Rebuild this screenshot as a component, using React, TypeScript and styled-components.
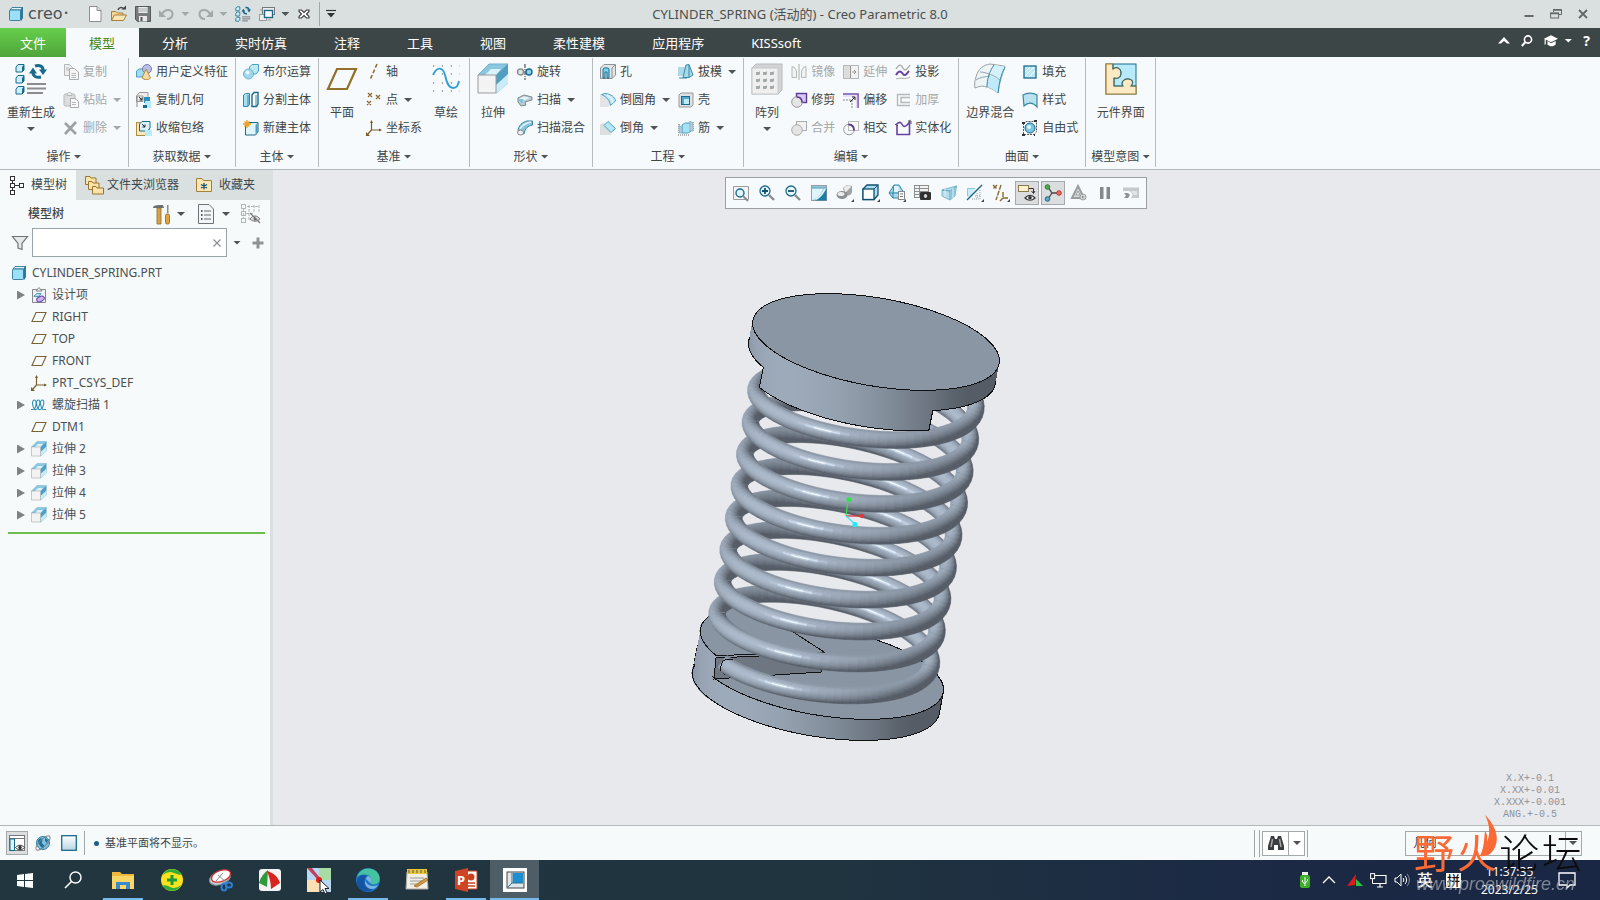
import React from "react";
import styled, { createGlobalStyle } from "styled-components";

const Global = createGlobalStyle`
  * { box-sizing: border-box; }
  html, body, #root { height: 100%; }
  body {
    margin: 0;
    font-family: "Noto Sans", "Noto Sans CJK SC", sans-serif;
    font-size: 12px;
    line-height: 16px;
    color: #3f4648;
    overflow: hidden;
  }
  button, input, select { font: inherit; color: inherit; }
  button { background: none; border: 0; padding: 0; margin: 0; white-space: nowrap; }
`;

/* ---------- icons ---------- */

const Svg = styled.svg`
  display: block;
  flex: none;
`;

const B = "#1b6a8c";
const L = "#9fdcf3";
const P = "#d9f2fb";
const T = "#8a6b2f";
const G = "#8b8f91";

const extrude = (
  <>
    <path d="M1 12 12 1H31L19 12z" fill="#8cc7e0" stroke="#6fb0cc" />
    <path d="M31 1V20L19 31V12z" fill="#4f9fc2" />
    <path d="M31 11V20L19 31V22z" fill="#c9ecf8" />
    <path d="M8 12 14 6H24L19 12z" fill="#d9f2fb" />
    <path d="M1 12H19V30H1z" fill="#f3f3f3" stroke="#9b9b9b" />
  </>
);

const icons: Record<string, [number, React.ReactNode]> = {
  cube: [16, <><path d="M2 4 4 1.500H14.500L13 4z" fill="#dff4fb" stroke={B} strokeWidth=".8" /><path d="M13 4 14.500 1.500V12L13 14.500z" fill="#2f87ab" stroke={B} strokeWidth=".8" /><rect x="1.500" y="4" width="11" height="10.500" rx="1" fill="#9be0f8" stroke={B} strokeWidth=".8" /></>],
  newDoc: [16, <><path d="M2.500 .5H10L14 4.500V15.500H2.500z" fill="#fff" stroke="#8d8d8d" /><path d="M10 .5V4.500H14" fill="#ddd" stroke="#8d8d8d" /></>],
  open: [16, <><path d="M.5 14V5.500H5L6.500 7H12V9" fill="#f3d796" stroke="#a5803a" /><path d="M.5 14.500 3.500 9H15.500L12.500 14.500z" fill="#fbe7b6" stroke="#a5803a" /><path d="M7 4C8 1 11 1 13 3" fill="none" stroke="#444" strokeWidth="1.500" /><path d="M10.500 3.500H15V-.5z" fill="#444" /></>],
  save: [16, <><path d="M.5 .5H15.500V15.500H2.500L.5 13.500z" fill="#777b7d" stroke="#55595b" /><rect x="3.500" y="1" width="9" height="6" fill="#eee" /><path d="M4 3H12M4 5H12" stroke="#aaa" /><rect x="4" y="10" width="8" height="5.500" fill="#e9e9e9" /><rect x="5.500" y="11" width="2" height="4" fill="#555" /></>],
  undo: [16, <><path d="M3 8C6 2 14 3 13.500 8.500 13 12 10 13 8 13" fill="none" stroke="#a3a8a8" strokeWidth="2" /><path d="M0 4V11H7z" fill="#a3a8a8" /></>],
  redo: [16, <><path d="M13 8C10 2 2 3 2.500 8.500 3 12 6 13 8 13" fill="none" stroke="#a3a8a8" strokeWidth="2" /><path d="M16 4V11H9z" fill="#a3a8a8" /></>],
  regen: [20, <><g fill="#c9effa" stroke={B}><path d="M1 2.500 2.500 1H6V5L5 6H1z" /><path d="M1 9 2.500 7.500H6V11.500L5 12.500H1z" /><path d="M1 15.500 2.500 14H6V18L5 19H1z" /></g><path d="M13 2C16 1.500 17.500 3 17.500 5M15 9.500C12 10 10.500 8.500 10.500 6" fill="none" stroke={B} strokeWidth="2" /><path d="M15 4.500H20L17.500 8zM8 7H13L10.500 3.500z" fill={B} /><path d="M9 13.500H19M9 16H19M9 18.500H16" stroke="#8b8b90" strokeWidth="1.500" /></>],
  windows: [16, <><rect x="3.500" y="1.500" width="12" height="7" fill="#eee" stroke="#777" /><rect x=".5" y="8.500" width="7" height="6" fill="#eee" stroke="#999" /><rect x="5.500" y="4.500" width="8" height="7" fill="#fff" stroke={B} strokeWidth="1.400" /><path d="M1 4H4M9 14H12" stroke="#999" /></>],
  closeDoc: [14, <path d="M2 3H4.500L7 5.500 9.500 3H12V4.500L9.500 7 12 9.500V11H9.500L7 8.500 4.500 11H2V9.500L4.500 7 2 4.500z" fill="#fff" stroke="#3c3c3c" strokeWidth="1.100" />],
  customise: [12, <><path d="M1 2.500H11" stroke="#333" strokeWidth="1.200" /><path d="M2 5H10L6 9.500z" fill="#333" /></>],
  bigRegen: [32, <><g fill="#c9effa" stroke={B}><path d="M1 4 3 1.500H9V7L7 9H1z" /><path d="M1 15 3 12.500H9V18L7 20H1z" /><path d="M1 26 3 23.500H9V29L7 31H1z" /></g><path d="M9 1.500V7L7 9V4zM9 12.500V18L7 20V15zM9 23.500V29L7 31V26z" fill={B} /><path d="M20 3C25 1.500 28 3.500 28 7M26 14C21 15 18 13 18 9.500" fill="none" stroke={B} strokeWidth="3" /><path d="M24 6.500H32L28 12zM14 10.500H22L18 4.500z" fill={B} /><path d="M12 21H31M12 25.500H31M12 30H28" stroke="#8b8b90" strokeWidth="2" /></>],
  copy: [16, <><path d="M1.500 .5H6.500L9.500 3.500V11.500H1.500z" fill="#eee" stroke="#b5b8b8" /><path d="M6.500 4.500H11.500L15.500 8V15.500H6.500z" fill="#f6f6f6" stroke="#a9acac" /><path d="M3 4H6M3 6H6M8.500 9.500H13M8.500 11.500H13M8.500 13.500H13" stroke="#b5b8b8" /></>],
  paste: [16, <><rect x="1" y="2" width="11" height="12" rx="1.500" fill="#ddd" stroke="#b5b8b8" /><path d="M4 3.500C4 1 5 .5 6.500 .5S9 1 9 3.500z" fill="#eee" stroke="#b5b8b8" /><path d="M7.500 6.500H12L15.500 9.500V15.500H7.500z" fill="#fafafa" stroke="#a9acac" /><path d="M9 10.500H13M9 12.500H13" stroke="#b5b8b8" /></>],
  del: [16, <path d="M2 3 13 14M13 2 2 14" stroke="#9da1a1" strokeWidth="2.600" />],
  udf: [16, <><path d="M.5 7 3 5H9V11L7 13H.5z" fill={L} stroke="#4c9fc0" /><circle cx="11" cy="5" r="4.500" fill="#b9bfe6" stroke="#777fb0" /><path d="M10 5 14.500 14C13 16 8 16 6 14z" fill="#f5dca4" stroke="#b08a3f" /></>],
  copyGeom: [16, <><path d="M.5 4 3.500 .5H12V8M.5 4H7V9.500H.5z" fill="#ededed" stroke="#999" /><path d="M1 15V4" stroke="#888" /><path d="M3 5 6 8M6 5.500V8H3.500" stroke="#222" fill="none" /><rect x="8" y="5" width="6" height="6" fill="#2d8fb8" /><rect x="9" y="9" width="6" height="7" fill="#b9ecfb" /><rect x="7" y="13" width="4" height="3" fill={B} /></>],
  shrink: [16, <><rect x=".5" y="2.500" width="13" height="13" fill="#fbe7bb" stroke="#b08a3f" /><path d="M3.500 4 6 1.500H14V8L11.500 11H3.500z" fill={P} stroke={B} /><path d="M6 4 9 7M9 4.500V7H6.500" stroke="#222" fill="none" /><rect x="9" y="10" width="7" height="6" fill="#b9ecfb" /></>],
  boolean: [16, <><path d="M6.500 3 9 .5H15.500V7L13 10H6.500z" fill="#bde7f5" stroke="#4c9fc0" /><circle cx="5.500" cy="10" r="5" fill="#9fd8ee" stroke="#6fb0cc" /><circle cx="4.500" cy="8.500" r="2" fill="#e8f8fd" /></>],
  split: [16, <><path d="M.5 3 2.500 1.500H6.500V12L5 14.500H.5z" fill="#a7dff2" stroke="#2f87ab" /><path d="M9 3 11 .5H15V12L13.500 14.500H9z" fill="#fff" stroke={B} strokeWidth="1.400" /><path d="M5 14V3M13 14V3" stroke="#2f87ab" /></>],
  newBody: [16, <><path d="M2.500 5 5 2.500H15V12L12.500 15H2.500z" fill="#dff4fb" stroke={B} /><path d="M12.500 15V5L15 2.500V12z" fill="#4f9fc2" /><path d="M4 0V8M0 4H8M1.500 1.500 6.500 6.500M6.500 1.500 1.500 6.500" stroke="#f0a020" strokeWidth="1.300" /></>],
  plane: [32, <path d="M11 6H30L21 26H2z" fill="none" stroke="#91702c" strokeWidth="2.200" />],
  planeSmall: [16, <path d="M5 3.500H15L11 12.500H1z" fill="none" stroke="#7a6233" strokeWidth="1.100" />],
  axis: [16, <path d="M11 0 4 16" stroke={T} strokeWidth="1.500" strokeDasharray="4 2" />],
  points: [16, <path d="M2 1 6 5M6 1 2 5M10 3 14 7M14 3 10 7M1 9 5 13M5 9 1 13" stroke={T} strokeWidth="1.300" />],
  csys: [16, <><path d="M5.500 1V10H15M5.500 10 1 15" fill="none" stroke="#7a5f2b" strokeWidth="1.200" /><path d="M4 3 5.500 0 7 3zM13 8.500 16 10 13 11.500zM0 12V16H4z" fill="#7a5f2b" /></>],
  sketch: [32, <><path d="M3 3H30M3 11H30M3 20H30M3 28H30" stroke="#555" strokeWidth="1.200" strokeDasharray="1.200 7.700" /><path d="M3 12C7 3 13 4 15 12 17 21 19 25 23 25 27 25 28 22 29 18" fill="none" stroke="#2f9fd6" strokeWidth="1.800" /></>],
  extrude: [32, extrude],
  revolve: [16, <><ellipse cx="3.500" cy="8" rx="3" ry="3" fill="#dfe5e8" stroke={G} strokeWidth="1.400" /><ellipse cx="12" cy="8" rx="3" ry="3" fill="#8fd3ee" stroke={B} strokeWidth="1.400" /><path d="M8 0V16" stroke="#333" strokeDasharray="4 1 1 1" /></>],
  sweep: [16, <><path d="M1 6 7 3 15 5V8L8 10 9 13 4 14 1 10z" fill="#bccbd2" stroke="#7d8a90" /><path d="M2 6.500 7 4.500 13 6 8 8z" fill="#e6f4f9" /><path d="M1 7H6V11H4z" fill="#7fc4dd" /></>],
  sweepBlend: [16, <><path d="M1 12C1 5 6 2 10 1H15.500V5C11 6 8 8 7 14z" fill="#86c8e2" stroke="#3c86a4" /><path d="M3 9C5 5 9 3 14 2" stroke="#e8f8fd" fill="none" strokeWidth="1.500" /><ellipse cx="3.500" cy="12.500" rx="3" ry="2.500" fill="#eee" stroke="#888" /></>],
  hole: [16, <><path d="M.5 4 4 .5H15.500V11L12 14.500H.5z" fill="#e3e6e7" stroke="#8d9294" /><path d="M12 14.500V4L15 1" stroke="#8d9294" fill="none" /><path d="M3 5C3 3.500 9 3.500 9 5V14H7V8H5V14H3z" fill="#7fd3f0" stroke={B} /></>],
  round: [16, <><path d="M0 2H5C11 2 14 6 14.500 9L9 14V15H0z" fill="#e2e4e5" /><path d="M5 1.500C11 2 15 5 15.500 9L10.500 13.500C10 9 7 5 1.500 2.500z" fill="#c3eaf6" stroke="#4c9fc0" /><path d="M7 3C11 5 12 7 13 11" stroke="#fff" fill="none" /></>],
  chamfer: [16, <><path d="M0 4 4 3 11 11V15H0z" fill="#dcdfe0" /><path d="M8 1.500 15.500 8.500 11 12.500 4 5.500z" fill="#b5e8f7" stroke="#4c9fc0" /></>],
  draft: [16, <><path d="M0 3H7V12H0z" fill="#8fcbe0" opacity=".7" /><path d="M8 1 11 .5 15 11 11 13.500H5z" fill="#a4daef" stroke="#3c86a4" /><path d="M11 1V13M1 14H9" stroke="#3c86a4" /></>],
  shell: [16, <><path d="M1 3 3 1H15V13L13 15H1z" fill="#dfe1e2" stroke="#999" /><rect x="3.500" y="4.500" width="8" height="8" fill="#57a9c9" stroke={B} /><rect x="6" y="7" width="5" height="5" fill="#bdeaf8" /></>],
  rib: [16, <><path d="M4 5 7 3H13V11L10 13H4z" fill="#a4e2f6" stroke="#4c9fc0" /><path d="M1 4V14M0 15H12M15 2V12" stroke="#666" strokeDasharray="1 1" /><path d="M1 5 4 8V13H1zM12 1 15 3V11L12 11z" fill="#b9cdd5" stroke="#6fa0b4" strokeWidth=".6" /></>],
  pattern: [32, <><path d="M1 5 5 1H31V27L27 31H1z" fill="#d3d4d5" stroke="#b9bbbb" /><rect x="1" y="5" width="26" height="26" fill="#efefef" stroke="#c6c8c8" /><g fill="#a5a9aa">{[8, 15, 22].map(y => [5, 12, 19].map(x => <path key={`${x}-${y}`} d={`M${x} ${y + 1}H${x + 3}L${x + 4} ${y}V${y + 3}L${x + 3} ${y + 4}H${x}z`} />))}</g></>],
  mirror: [16, <><path d="M1 2.500C4 3 5 5 5.500 8V13.500H1z" fill="#f2f2f2" stroke="#b5b8b8" /><path d="M15 2.500C12 3 11 5 10.500 8V13.500H15z" fill="#f2f2f2" stroke="#b5b8b8" /><path d="M8 0V16" stroke="#a9acac" /></>],
  extend: [16, <><rect x=".5" y="1.500" width="15" height="13" fill="#f2f2f2" stroke="#b5b8b8" /><rect x="1" y="2" width="6" height="12" fill="#dcdede" /><path d="M7.500 2V14M9 8H13M11 6 13 8 11 10" stroke="#999" fill="none" /></>],
  project: [16, <><path d="M1 5C4 0 6 0 8 4S12 5 15 1" fill="none" stroke="#aaa" strokeWidth="1.400" /><path d="M1 11C4 6 6 7 8 10S12 9 14 7" fill="none" stroke="#6a43a0" strokeWidth="2" /><path d="M1 15C6 13 10 16 15 13" fill="none" stroke="#aaa" /></>],
  trim: [16, <><rect x="5.500" y="1.500" width="10" height="9" fill="#d8c8f4" stroke="#5b3a94" strokeWidth="1.400" /><circle cx="6" cy="10" r="5.300" fill="#e5e5e7" stroke="#999" /><path d="M5.500 5C9 5 11 7 11 10.500" fill="none" stroke="#5b3a94" strokeWidth="1.500" /></>],
  offset: [16, <><path d="M0 2H15V16" fill="none" stroke="#7452ab" strokeWidth="1.600" /><path d="M0 4H13.500V16" fill="none" stroke="#e3d8f8" strokeWidth="1.500" /><path d="M0 8H9V16" fill="none" stroke="#888" strokeDasharray="2 1" /><path d="M7 10 12 5M9 5H12V8" stroke="#222" fill="none" /></>],
  thicken: [16, <path d="M15 2.500H2.500V13.500H15M15 5.500H6V10.500H15" fill="none" stroke="#b5b8b8" strokeWidth="1.400" />],
  merge: [16, <><rect x="5.500" y="1.500" width="10" height="9" fill="#f2f2f2" stroke="#a9acac" /><circle cx="6" cy="10" r="5.300" fill="#e4e4e4" stroke="#a9acac" /></>],
  intersect: [16, <><rect x="5.500" y="1.500" width="10" height="9" fill="#fafafa" stroke="#bbb" /><circle cx="6" cy="9.500" r="5.300" fill="none" stroke="#999" /><path d="M5.500 4.500C9 4.500 11 7 11 10.500" fill="none" stroke="#5b3a94" strokeWidth="1.800" /></>],
  solidify: [16, <><path d="M1 5C4 1 6 2 7.500 5S12 6 14.500 2V14.500H2V5" fill="none" stroke="#6a43a0" strokeWidth="1.600" /><path d="M0 4 3 6M13 1H16V4" stroke="#555" fill="none" /></>],
  boundary: [32, <><path d="M2 14C4 6 9 2 16 1L30 3C33 3 27 10 24 30 20 27 15 24 12 24 8 22 4 24 1 25 0 21 1 17 2 14z" fill="#eef4f6" stroke="#9aa2a5" /><path d="M16 13C20 14 24 16 27 18 25 22 25 26 24 30 20 27 16 24 13 24 13 20 14 16 16 13z" fill="#bfeafa" /><path d="M21 2 31 4C29 8 28 12 27 17L17 13C18 9 19 5 21 2z" fill="#d3f1fb" /><path d="M6 9C12 9 22 13 27 18M2 17C6 14 11 14 16 13" fill="none" stroke="#8fa5ae" /><path d="M20 2C15 9 13 17 13 24M31 4C27 11 25 20 24 30" fill="none" stroke="#2f87ab" /></>],
  fill: [16, <><rect x="2" y="2" width="12" height="12" fill="#b9e9f8" stroke={B} strokeWidth="1.300" /><path d="M3 12 12 3M3 8 8 3M7 13 13 7" stroke="#fff" /></>],
  style: [16, <path d="M1 3C5 .5 11 .5 15 3V15C11 10 6 10 2 14z" fill="#b9e2ef" stroke="#3c86a4" strokeWidth="1.200" />],
  freestyle: [16, <><path d="M1.500 4 4 1.500H14.500V12L12 14.500H1.500z" fill="none" stroke="#555" strokeDasharray="2 1" /><circle cx="8" cy="8" r="5" fill="#7cc6e3" stroke={B} /><circle cx="7" cy="7" r="2" fill="#dff5fc" /><path d="M0 3H3M0 15H3M12 1H15M12 15H13" stroke="#333" strokeWidth="2" /></>],
  component: [32, <><rect x="1" y="1" width="30" height="30" fill="#b7ebfb" stroke={B} /><path d="M1 1H8V6C11 3 16 5 16 10S12 16 9 15V23H18C15 19 20 15 24 16 29 17 28 21 26 23H31V31H1z" fill="#fce9c5" stroke="#a8802f" strokeWidth="1.200" /><path d="M8 1V6C11 3 16 5 16 10S12 16 9 15V23H18C15 19 20 15 24 16 29 17 28 21 26 23H31" fill="none" stroke={B} /></>],
  treeTab: [16, <g fill="#fff" stroke="#333"><path d="M4.500 3V15M6 8.500H11" /><rect x="2.500" y="-.5" width="4" height="4" /><rect x="2.500" y="6.500" width="4" height="4" /><rect x="2.500" y="13.500" width="4" height="4" /><rect x="11.500" y="6.500" width="4" height="4" /></g>],
  folders: [20, <g fill="#fbe3a8" stroke="#9a7430"><path d="M1.500 1.500H6L7 3H12V9.500H1.500z" /><path d="M4.500 6.500H8L9 8H15V14.500H4.500z" /><path d="M8.500 11.500H12L13 13H19.500V19H8.500z" /></g>],
  favs: [16, <><path d="M.5 14.500V1.500H6L7.500 3.500H15.500V14.500z" fill="#fbe7b6" stroke="#a5803a" /><path d="M8 6V12.500M5 7.500 11 11M11 7.500 5 11" stroke="#12506e" strokeWidth="1.300" /></>],
  tools: [20, <><path d="M2 4C2 1 6 1 12 1L13 4H2z" fill="#6b7073" /><path d="M6 4H10V20H6z" fill="#d8a24a" stroke="#8f6a2b" strokeWidth=".8" /><path d="M16 1H17.500V9H16z" fill="#888" /><rect x="14.500" y="10" width="4" height="10" rx="1.500" fill="#e0a43c" stroke="#8f6a2b" strokeWidth=".8" /></>],
  listDoc: [20, <><path d="M2.500 .5H13L17.500 5V19.500H2.500z" fill="#f3f6f8" stroke="#6d7477" /><path d="M5 7H6.500M5 11H6.500M5 15H6.500" stroke="#555" strokeWidth="2" /><path d="M8 7H15M8 11H15M8 15H15" stroke="#666" /></>],
  treeHide: [20, <><g fill="none" stroke="#b2b6b7"><rect x=".5" y=".5" width="4" height="4" /><rect x=".5" y="7.500" width="4" height="4" /><rect x=".5" y="14.500" width="4" height="4" /><path d="M2.500 5V14M5 9.500H12M8 1V16M13 1V9M18 1V9M6 2.500H18" strokeDasharray="3 1" /></g><path d="M9 15C12 11 16 11 19 15 16 18 12 18 9 15z" fill="#ddd" stroke="#777" /><circle cx="14" cy="15" r="1.500" fill="#666" /><path d="M9 9 19 19" stroke="#777" strokeWidth="1.200" /></>],
  funnel: [16, <path d="M.5 1.500H15.500L10 8.500V14.500L6 13V8.500z" fill="#e6e9ea" stroke="#6d7477" strokeWidth="1.200" />],
  clearX: [12, <path d="M2.500 2.500 9.500 9.500M9.500 2.500 2.500 9.500" stroke="#8b8f91" strokeWidth="1.200" />],
  plus: [12, <path d="M6 .5V11.500M.5 6H11.500" stroke="#8f9394" strokeWidth="3" />],
  design: [16, <><path d="M1.500 2.500H14.500V15.500H1.500z" fill="#f0f1f3" stroke="#85898c" /><path d="M5 4 8 .5 11 4z" fill="#eee" stroke="#85898c" /><path d="M3 9 6 6.500H10L8 9.500H3z" fill="#a9dff2" stroke="#3c86a4" strokeWidth=".8" /><ellipse cx="9.500" cy="12" rx="4" ry="2.500" fill="#c9b2ee" stroke="#6a43a0" transform="rotate(-25 9.500 12)" /></>],
  helix: [16, <path d="M0 12.500H2C5 12.500 6.500 3 3.500 3S1 10 4 12.500C8 13.500 10.500 3 7.500 3S5 10 8 12.500C12 13.500 14.500 3 11.500 3S9 10 12 12.500H15" fill="none" stroke="#2f8fb8" strokeWidth="1.100" />],
  zoomFit: [16, <><path d="M.5 1.500H15.500V14.500H.5z" fill="#f4f4f4" stroke="#9a9d9e" /><circle cx="7" cy="8" r="4" fill="#dff4fb" stroke={B} strokeWidth="1.400" /><path d="M10 11 15 16" stroke="#8a8d8e" strokeWidth="2" /></>],
  zoomIn: [16, <><circle cx="6" cy="6" r="5" fill="#e6f7fc" stroke={B} strokeWidth="1.300" /><path d="M6 3V9M3 6H9" stroke="#12506e" strokeWidth="1.800" /><path d="M10 10 15 15" stroke="#8a8d8e" strokeWidth="2.400" /></>],
  zoomOut: [16, <><circle cx="6" cy="6" r="5" fill="#e6f7fc" stroke={B} strokeWidth="1.300" /><path d="M3 6H9" stroke="#12506e" strokeWidth="1.800" /><path d="M10 10 15 15" stroke="#8a8d8e" strokeWidth="2.400" /></>],
  repaint: [16, <><rect x=".5" y=".5" width="15" height="15" fill="#a6d9ea" stroke="#9a9d9e" /><path d="M1 4H12C10 10 6 13 1 15z" fill="#dff4fb" /><path d="M4 15.500C9 14 13 9 15.500 3V15.500z" fill="#1e7ba6" /><path d="M5 14C9 12 12 8 14 4" stroke="#fff" fill="none" /><path d="M.5 2.500H15.500" stroke="#7fb4c8" strokeWidth="2" /></>],
  shade: [18, <><path d="M7 4 11 1 16 2V8C15 12 12 12 9 11z" fill="#a0a3a5" /><path d="M8 4C10 1 14 1 15 3L9 9z" fill="#ececec" /><ellipse cx="6" cy="11" rx="5.500" ry="4" fill="#8b8e90" /><ellipse cx="5" cy="10" rx="3.500" ry="2" fill="#ececec" /><path d="M15 18H18V15z" fill="#444" /></>],
  display: [18, <><path d="M1 5 5 1H16V11L12 15.500H1z" fill="#a9dff2" stroke="#12506e" strokeWidth="1.300" /><rect x="1" y="5" width="11" height="10.500" fill="#fff" stroke="#12506e" strokeWidth="1.300" /><path d="M12 5 16 1" stroke="#12506e" /><path d="M15 18H18V15z" fill="#444" /></>],
  savedViews: [18, <><path d="M1 9 6 1H11L16 9 12 14H5z" fill="#a9dbee" stroke="#2f87ab" /><path d="M1 9H16M6 1 5 9V14" fill="none" stroke="#2f87ab" /><path d="M6 2H10L12 8H6z" fill="#dff4fb" /><rect x="10.500" y="7.500" width="6" height="8" fill="#fff" stroke="#888" /><path d="M12 10H15M12 12.500H15" stroke="#777" /><path d="M15 18H18V15z" fill="#444" /></>],
  viewMgr: [18, <><rect x=".5" y="1.500" width="14" height="12" fill="#f4f4f4" stroke="#8b8f91" /><path d="M.5 4.500H14.500M.5 7.500H14.500M.5 10.500H8M5.500 1V13" stroke="#8b8f91" /><rect x="6" y="8" width="11" height="8" rx="1" fill="#333" /><circle cx="11.500" cy="12" r="2.500" fill="#ccc" stroke="#111" /></>],
  persp: [16, <><path d="M1 5 8 3 15.500 1 14 11 9 15 1 11z" fill="#b5dcea" stroke="#7db7cc" /><path d="M1 5 9 6 15.500 1M9 6V15" fill="none" stroke="#5a9fba" /><path d="M9 6 15.500 1 14 11 9 15z" fill="#8cc4da" /><path d="M4 4V12M12 3V13" stroke="#dff0f6" /></>],
  clip: [18, <><path d="M1 4H10L4 13H1z" fill="#c9ecf8" /><path d="M1.500 4.500H9M1.500 4.500V12" stroke="#8fc8dd" /><path d="M1 16 16 1" stroke={B} strokeWidth="1.500" /><path d="M6 15H14V6M9 12H14M11 9V15" fill="none" stroke="#999" strokeDasharray="1 1" /><path d="M15 18H18V15z" fill="#444" /></>],
  datum: [18, <><path d="M1 1 5 5M5 1 1 5M9 1 4 16M11 8V14H17M11 14 8 17" stroke={T} fill="none" strokeWidth="1.400" strokeDasharray="5 1" /><path d="M15 18H18V15z" fill="#444" /></>],
  annot: [18, <><rect x=".5" y="1.500" width="10" height="6" fill="#fdf0cf" stroke="#8d7a4b" /><path d="M11 4.500H15.500V9M13.500 7 15.500 9.500 17 7" fill="none" stroke="#333" /><path d="M7 14C10 10.500 14 10.500 17 14 14 17 10 17 7 14z" fill="#eee" stroke="#333" strokeWidth="1.200" /><circle cx="12" cy="13.800" r="1.800" fill="#333" /></>],
  spin: [18, <><path d="M4 3 8 9 14 9M8 9 4 15" stroke="#444" strokeWidth="1.300" fill="none" /><circle cx="3.500" cy="3" r="2.300" fill="#4fae4f" stroke="#2d7d2d" /><circle cx="15" cy="9" r="2.300" fill="#e8685e" stroke="#b23b33" /><circle cx="3.500" cy="15" r="2.300" fill="#5fa9cf" stroke={B} /></>],
  sim: [16, <><path d="M1 13 7 1 13 13z" fill="#d7d9da" stroke="#9a9d9e" strokeWidth="2" /><path d="M5 10H9L7 6z" fill="#f7fafc" stroke="#9a9d9e" /><circle cx="12" cy="12" r="3" fill="#ddd" stroke="#9a9d9e" /><path d="M11 10.500V13.500L13.500 12z" fill="#888" /></>],
  pause: [16, <path d="M3 2H6.500V14H3zM9.500 2H13V14H9.500z" fill="#85888a" />],
  flow: [16, <><path d="M0 2.500H16V13H8C11 10 9 6 5 6H0z" fill="#c6c8ca" /><path d="M1 8H5L7 10 5 13H1L3 10.500z" fill="#8f9294" /><path d="M8 6H14V10H11C10 8 9 7 8 6z" fill="#e3e4e6" /></>],
  showTree: [16, <><rect x=".5" y=".5" width="15" height="15" fill="#fff" stroke="#777" /><path d="M1 3.500H15" stroke="#777" /><rect x="1" y="4" width="4.500" height="11.500" fill="#dff4fb" stroke={B} /><path d="M6.500 12.500C9 9.500 13 9.500 15.500 12.500 13 15.500 9 15.500 6.500 12.500z" fill="#eee" stroke="#333" /><circle cx="11" cy="12.500" r="1.700" fill="#333" /></>],
  globe: [18, <><circle cx="9" cy="9" r="6.500" fill="#7cc3e4" stroke="#2c7ea8" /><path d="M5 5C8 3 9 6 8 8S11 10 10 13 6 12 5 10 3 7 5 5zM11 4 14 6 13 9 11 7z" fill="#1f6f9a" /><ellipse cx="9" cy="9" rx="9.500" ry="3.500" fill="none" stroke="#7b8083" transform="rotate(-45 9 9)" /></>],
  blank: [16, <><defs><linearGradient id="blankFill" x1="0" y1="0" x2="0" y2="1"><stop offset="0" stopColor="#fff" /><stop offset="1" stopColor="#b9d6e2" /></linearGradient></defs><rect x=".7" y=".7" width="14.600" height="14.600" fill="url(#blankFill)" stroke={B} strokeWidth="1.300" /></>],
  find: [16, <><path d="M3 1H6L7 4H9L10 1H13L16 11V15H10V10H6V15H0V11z" fill="#3a3d3f" /><path d="M4.500 4 3 12M11.500 4 13 12" stroke="#a5a8aa" strokeWidth="1.500" /></>],
  up: [12, <path d="M0 8.500 6 2 12 8.500H9L6 6 3 8.500z" fill="#fff" />],
  search: [12, <><circle cx="7" cy="4.500" r="3.600" fill="none" stroke="#fff" strokeWidth="1.600" /><path d="M4.500 7 .8 11" stroke="#fff" strokeWidth="2" /></>],
  hat: [12, <><path d="M0 4 6 1 12 4 6 7z" fill="#fff" /><path d="M3 6V9C5 11 8 11 10 9V6L6 8z" fill="#fff" /><path d="M1 4V9" stroke="#fff" /></>],
  minimize: [12, <path d="M1.500 8H10.500" stroke="#666" strokeWidth="2" />],
  restore: [12, <><path d="M3.500 4V1.500H11.500V6.500H9" fill="none" stroke="#666" /><rect x=".6" y="5" width="8" height="5" fill="none" stroke="#666" /><path d="M3 2H12M0 5.500H9" stroke="#666" strokeWidth="1.500" /></>],
  closeWin: [12, <path d="M2 2 10 10M10 2 2 10" stroke="#666" strokeWidth="1.800" />],
};

const Icon = ({ name, size }: { name: string; size?: number }) => {
  const [box, body] = icons[name];
  const s = size ?? box;
  return <Svg width={s} height={s} viewBox={`0 0 ${box} ${box}`} overflow="visible" aria-hidden="true">{body}</Svg>;
};

const Caret = styled.span<{ $tone?: string }>`
  flex: none;
  width: 8px;
  height: 4px;
  background: ${p => p.$tone ?? "#4d5456"};
  clip-path: polygon(0 0, 100% 0, 50% 100%);
`;

/* ---------- frame ---------- */

const Page = styled.div`
  height: 100vh;
  display: flex;
  flex-direction: column;
  background: #f7fafc;
`;

const TitleBar = styled.header`
  flex: none;
  height: 28px;
  display: grid;
  grid-template-columns: 1fr auto 1fr;
  align-items: center;
  background: #dae0df;
`;

const QuickBar = styled.div`
  display: flex;
  align-items: center;
  padding-left: 8px;
`;

const Brand = styled.span`
  display: flex;
  align-items: center;
  gap: 4px;
  margin-right: 19px;
  font-family: "DejaVu Sans", sans-serif;
  font-size: 16px;
  color: #4b5152;
  sup { margin-left: -3px; font-size: 8px; line-height: 8px; }
`;

const QuickButton = styled.button`
  display: flex;
  align-items: center;
  gap: 6px;
  margin-right: 8px;
`;

const Divider = styled.span<{ $h: number; $gap?: number }>`
  width: 1px;
  height: ${p => p.$h}px;
  margin-right: ${p => p.$gap ?? 0}px;
  background: #a2a8a8;
`;

const Title = styled.h1`
  margin: 0;
  font-size: 13px;
  font-weight: 400;
  line-height: 18px;
  color: #4a4f50;
`;

const WindowButtons = styled.div`
  display: flex;
  justify-content: flex-end;
  gap: 15px;
  padding-right: 11px;
`;

const TabBar = styled.nav`
  flex: none;
  height: 29px;
  display: flex;
  background: #3d4647;
`;

const Tab = styled.button<{ $kind?: "file" | "active" }>`
  margin-right: ${p => (p.$kind ? 0 : 1)}px;
  padding: 0 ${p => (p.$kind === "file" ? 20 : p.$kind === "active" ? 24 : 23)}px 0 ${p => (p.$kind === "file" ? 20 : 23)}px;
  font-size: 13px;
  color: ${p => (p.$kind === "active" ? "#3f8a22" : "#fff")};
  background: ${p =>
    p.$kind === "file" ? "linear-gradient(#66cf4b, #4fa43a)" : p.$kind === "active" ? "#f7fafc" : "none"};
`;

const TabTools = styled.div`
  margin-left: auto;
  display: flex;
  align-items: center;
  gap: 11px;
  padding: 0 10px 4px 0;
  color: #fff;
  font-weight: 700;
  font-size: 14px;
`;

/* ---------- ribbon ---------- */

const Ribbon = styled.div`
  flex: none;
  height: 113px;
  display: flex;
  border-bottom: 1px solid #b1b8b9;
`;

const Group = styled.section`
  display: flex;
  flex-direction: column;
  border-right: 1px solid;
  border-image: linear-gradient(transparent 2px, #b6bbbc 2px, #b6bbbc 109px, transparent 109px) 1;
`;

const GroupBody = styled.div`
  display: flex;
  justify-content: center;
  gap: 8px;
  height: 85px;
  padding: 1px 7px 0;
`;

const GroupLabel = styled.button`
  display: flex;
  justify-content: center;
  align-items: center;
  gap: 3px;
  height: 27px;
  padding: 2px 5px 0;
`;

const Column = styled.div`
  display: flex;
  flex-direction: column;
`;

const Command = styled.button<{ $off?: boolean }>`
  display: flex;
  align-items: center;
  height: 28px;
  gap: 4px;
  color: ${p => (p.$off ? "#a3a8a9" : "inherit")};
  ${Caret} { margin-left: 2px; background: ${p => (p.$off ? "#a3a8a9" : "#4d5456")}; }
`;

const BigCommand = styled.button`
  display: flex;
  flex-direction: column;
  align-items: center;
  padding-top: 5px;
  min-width: 32px;
  span { margin-top: 10px; }
  ${Caret} { margin-top: 6px; }
`;

type Cmd = { icon: string; text: string; off?: boolean; caret?: boolean };
type Item = { big: Cmd } | { col: Cmd[] };

const c = (icon: string, text: string, flags = ""): Cmd => ({
  icon, text, off: flags.includes("o"), caret: flags.includes("v"),
});

const groups: { label: string; items: Item[] }[] = [
  { label: "操作", items: [{ big: c("bigRegen", "重新生成", "v") }, { col: [c("copy", "复制", "o"), c("paste", "粘贴", "ov"), c("del", "删除", "ov")] }] },
  { label: "获取数据", items: [{ col: [c("udf", "用户定义特征"), c("copyGeom", "复制几何"), c("shrink", "收缩包络")] }] },
  { label: "主体", items: [{ col: [c("boolean", "布尔运算"), c("split", "分割主体"), c("newBody", "新建主体")] }] },
  { label: "基准", items: [{ big: c("plane", "平面") }, { col: [c("axis", "轴"), c("points", "点", "v"), c("csys", "坐标系")] }, { big: c("sketch", "草绘") }] },
  { label: "形状", items: [{ big: c("extrude", "拉伸") }, { col: [c("revolve", "旋转"), c("sweep", "扫描", "v"), c("sweepBlend", "扫描混合")] }] },
  { label: "工程", items: [{ col: [c("hole", "孔"), c("round", "倒圆角", "v"), c("chamfer", "倒角", "v")] }, { col: [c("draft", "拔模", "v"), c("shell", "壳"), c("rib", "筋", "v")] }] },
  { label: "编辑", items: [{ big: c("pattern", "阵列", "v") }, { col: [c("mirror", "镜像", "o"), c("trim", "修剪"), c("merge", "合并", "o")] }, { col: [c("extend", "延伸", "o"), c("offset", "偏移"), c("intersect", "相交")] }, { col: [c("project", "投影"), c("thicken", "加厚", "o"), c("solidify", "实体化")] }] },
  { label: "曲面", items: [{ big: c("boundary", "边界混合") }, { col: [c("fill", "填充"), c("style", "样式"), c("freestyle", "自由式")] }] },
  { label: "模型意图", items: [{ big: c("component", "元件界面") }] },
];

/* ---------- model tree ---------- */

const Workspace = styled.div`
  flex: 1;
  min-height: 0;
  display: flex;
`;

const Side = styled.aside`
  flex: none;
  width: 273px;
  border-right: 3px solid #dae0df;
  background: #f6fafb;
`;

const SideTabs = styled.div`
  display: flex;
  height: 30px;
  background: #dae0df;
`;

const SideTab = styled.button<{ $on?: boolean; $wide?: boolean }>`
  display: flex;
  align-items: center;
  gap: ${p => (p.$wide ? 3 : 7)}px;
  padding: 0 9px 0 8px;
  background: ${p => (p.$on ? "#f6fafb" : "none")};
`;

const TreeHead = styled.div`
  display: flex;
  align-items: center;
  height: 28px;
  gap: 11px;
  padding: 0 9px 0 28px;
  h2 { margin: 0; flex: 1; font-size: 12px; font-weight: 500; }
`;

const HeadButton = styled.button`
  display: flex;
  align-items: center;
  gap: 6px;
`;

const SearchRow = styled.div`
  display: flex;
  align-items: center;
  gap: 6px;
  padding: 0 17px 0 12px;
`;

const SearchBox = styled.div`
  flex: 1;
  display: flex;
  align-items: center;
  height: 29px;
  margin-left: -2px;
  padding-right: 3px;
  background: #fff;
  border: 1px solid #9aa3a5;
  input { flex: 1; min-width: 0; border: 0; outline: 0; background: none; }
`;

const SearchTools = styled.div`
  display: flex;
  align-items: center;
  gap: 11px;
`;

const Tree = styled.ul`
  list-style: none;
  margin: 5px 5px 0 8px;
  padding: 0 0 6px;
  border-bottom: 2px solid #6bbf4e;
`;

const TreeItem = styled.li<{ $root?: boolean }>`
  display: flex;
  align-items: center;
  height: 22px;
  gap: 5px;
  padding-left: ${p => (p.$root ? 3 : 9)}px;
  color: #4a4f50;
  white-space: nowrap;
`;

const Twisty = styled.span<{ $shown?: boolean }>`
  width: 8px;
  height: 9px;
  margin-right: 1px;
  background: ${p => (p.$shown ? "#7d8283" : "transparent")};
  clip-path: polygon(0 0, 100% 50%, 0 100%);
`;

const nodes: [string, string, boolean][] = [
  ["design", "设计项", true],
  ["planeSmall", "RIGHT", false],
  ["planeSmall", "TOP", false],
  ["planeSmall", "FRONT", false],
  ["csys", "PRT_CSYS_DEF", false],
  ["helix", "螺旋扫描 1", true],
  ["planeSmall", "DTM1", false],
  ["extrude", "拉伸 2", true],
  ["extrude", "拉伸 3", true],
  ["extrude", "拉伸 4", true],
  ["extrude", "拉伸 5", true],
];

/* ---------- viewport ---------- */

const Viewport = styled.main`
  flex: 1;
  min-width: 0;
  position: relative;
  display: flex;
  flex-direction: column;
  align-items: center;
  background: #e8e9ed;
`;

const ViewBar = styled.div`
  display: flex;
  align-items: center;
  height: 32px;
  margin: 7px 2px 0 0;
  padding: 0 2px;
  background: #f7fafc;
  border: 1px solid #9b9fa2;
`;

const ViewButton = styled.button<{ $on?: boolean }>`
  display: flex;
  align-items: center;
  justify-content: center;
  width: 24px;
  height: 24px;
  margin: 0 1px;
  border: 1px solid ${p => (p.$on ? "#a6a9ab" : "transparent")};
  background: ${p => (p.$on ? "#dcdddf" : "none")};
`;

const Model = styled.svg`
  display: block;
  flex: none;
  width: 340px;
  height: 470px;
  margin: 71px 173px 0 0;
`;

const Tolerances = styled.p`
  position: absolute;
  right: 34px;
  bottom: 4px;
  margin: 0;
  text-align: center;
  white-space: pre;
  font-family: "Liberation Mono", monospace;
  font-size: 10px;
  line-height: 12px;
  color: #8f9199;
`;

const viewButtons = ["zoomFit", "zoomIn", "zoomOut", "repaint", "shade", "display", "savedViews", "viewMgr", "persp", "clip", "datum", "annot", "spin", "sim", "pause", "flow"];

/* Parallel projection of the spring: x right, y down, z toward the viewer. */
type V3 = [number, number, number];
const tilt = (9.87 * Math.PI) / 180;
const sinE = 0.352;
const cosE = 0.936;
const E1: V3 = [Math.cos(tilt), Math.sin(tilt), 0];
const E2: V3 = [-Math.sin(tilt) * sinE, Math.cos(tilt) * sinE, cosE];
const E3: V3 = [Math.sin(tilt) * cosE, -Math.cos(tilt) * cosE, sinE];
const light: V3 = [-0.5, -0.45, 0.74];
const half: V3 = [-0.267, -0.24, 0.933];
const dot = (a: V3, b: V3) => a[0] * b[0] + a[1] * b[1] + a[2] * b[2];
const mix = (a: number, b: number, d: number): V3 =>
  [0, 1, 2].map(i => a * E1[i] + b * E2[i] + d * E3[i]) as V3;
const unit = (v: V3): V3 => {
  const n = Math.hypot(...v);
  return [v[0] / n, v[1] / n, v[2] / n];
};
const shade = (n: V3, gloss: boolean) => {
  const d = Math.max(dot(n, light), 0);
  const s = gloss ? 85 * Math.pow(Math.max(dot(n, half), 0), 90) : 0;
  return `rgb(${[85 + 90 * d, 92 + 97 * d, 102 + 104 * d].map(v => Math.min(255, Math.round(v + s))).join()})`;
};

const pitch = 32.4;
const radius = 110;
const down: [number, number] = [-Math.sin(tilt), Math.cos(tilt)];
const LANES = 13;
const STEPS = 36;

const coil = (from: number, to: number) => {
  const at = (t: number, s: number) => {
    const k = 67.5 - ((Math.PI - t) / (2 * Math.PI)) * pitch;
    const T3 = unit(mix(-radius * Math.sin(t), radius * Math.cos(t), -pitch / (2 * Math.PI) / cosE));
    const l = Math.hypot(T3[0], T3[1]);
    const n: V3 = [-T3[1] / l, T3[0] / l, 0];
    let m: V3 = [n[1] * T3[2], -n[0] * T3[2], n[0] * T3[1] - n[1] * T3[0]];
    if (m[2] < 0) m = [-m[0], -m[1], -m[2]];
    const r = Math.sqrt(Math.max(0, 1 - s * s));
    const o = mix(radius * Math.cos(t), radius * Math.sin(t), 0);
    return {
      x: 876 + k * down[0] + o[0] + 8.4 * s * n[0],
      y: 341 + k * down[1] + o[1] + 8.4 * s * n[1],
      n: [s * n[0] + r * m[0], s * n[1] + r * m[1], r * m[2]] as V3,
    };
  };
  const point = (t: number, s: number) => {
    const p = at(t, s);
    return `${p.x.toFixed(2)},${p.y.toFixed(2)}`;
  };
  const core = Array.from({ length: STEPS + 1 }, (_, i) => point(from + ((to - from) * i) / STEPS, 0)).join(" ");
  const out: React.ReactNode[] = [
    <polyline key="core" points={core} fill="none" stroke="#8390a0" strokeWidth="16" />,
  ];
  for (let i = 0; i < STEPS; i++) {
    const a = from + ((to - from) * i) / STEPS;
    const b = from + ((to - from) * (i + 1)) / STEPS;
    for (let j = 0; j < LANES; j++) {
      const s0 = -1 + (2 * j) / LANES;
      const s1 = -1 + (2 * (j + 1)) / LANES;
      const tone = shade(at((a + b) / 2, (s0 + s1) / 2).n, true);
      out.push(
        <polygon
          key={`${i}-${j}`}
          points={[point(a, s0), point(b, s0), point(b, s1), point(a, s1)].join(" ")}
          fill={tone}
          stroke={tone}
          strokeWidth=".6"
          strokeLinejoin="round"
        />
      );
    }
  }
  return out;
};

const rim = (cx: number, cy: number, from: number, to: number) => {
  const pts: string[] = [];
  for (let i = 0; i <= 48; i++) {
    const t = ((from + ((to - from) * i) / 48) * Math.PI) / 180;
    const o = mix(125.2 * Math.cos(t), 125.2 * Math.sin(t), 0);
    pts.push(`${(cx + o[0]).toFixed(1)},${(cy + o[1]).toFixed(1)}`);
  }
  return pts.join(" ");
};

const wallStops = Array.from({ length: 19 }, (_, i) => {
  const t = Math.PI - (Math.PI * i) / 18;
  return <stop key={i} offset={(1 + Math.cos(t)) / 2} stopColor={shade(mix(Math.cos(t), Math.sin(t), 0), false)} />;
});

const shift = (i: number) => `translate(${(i * pitch * down[0]).toFixed(2)} ${(i * pitch * down[1]).toFixed(2)})`;
const turns = [8, 7, 6, 5, 4, 3, 2, 1, 0];

const Spring = () => (
  <Model viewBox="680 280 340 470" role="img" aria-label="CYLINDER_SPRING" shapeRendering="crispEdges">
    <defs>
      <linearGradient id="upperWall" gradientUnits="userSpaceOnUse" x1="749" x2="998" y1="0" y2="0">{wallStops}</linearGradient>
      <linearGradient id="lowerWall" gradientUnits="userSpaceOnUse" x1="693" x2="942" y1="0" y2="0">{wallStops}</linearGradient>
      <g id="coilFront" shapeRendering="auto">{coil(Math.PI, 0)}</g>
      <g id="coilBack" shapeRendering="auto">{coil(0, -Math.PI)}</g>
      <g id="coilEnd" shapeRendering="auto">{coil(Math.PI - 0.5, 0)}</g>
    </defs>
    <g stroke="#111">
      <polygon points={`${rim(820, 671, 180, 360)} ${rim(816, 692, 0, 180)}`} fill="url(#lowerWall)" />
      <polygon points={rim(820, 671, 0, 360)} fill="#8995a2" />
      <polygon points={`${rim(824, 650, 188, 147)} ${rim(816, 692, 147, 188)}`} fill="url(#lowerWall)" stroke="url(#lowerWall)" strokeWidth="2" />
      <polyline points={rim(820, 671, 147, 100)} fill="none" />
      <polygon points={`824,652 ${rim(824, 650, 147, 229)}`} fill="#8995a2" />
      <polygon points="716,658 824,653 821,672 714,679" fill="#6d7681" />
      <polyline points={rim(816, 692, 188, 100)} fill="none" />
      <ellipse cx="727" cy="667" rx="6" ry="8" fill="#95a2b1" />
    </g>
    {turns.map(i => <use key={i} href="#coilBack" transform={shift(i)} />)}
    {turns.map(i => <use key={i} href={i === 8 ? "#coilEnd" : "#coilFront"} transform={shift(i)} />)}
    <path d="M733 660C724 657 720 662 721 671" fill="none" stroke="#111" />
    <polygon
      points={`${rim(876, 341.5, 0, 180)} ${rim(872, 362.5, 180, 148)} ${rim(868, 382.5, 148, 57)} ${rim(872, 362.5, 57, 0)}`}
      fill="url(#upperWall)"
    />
    <polyline
      points={`${rim(872, 362.5, 186, 148)} ${rim(868, 382.5, 148, 57)} ${rim(872, 362.5, 57, -4)}`}
      fill="none" stroke="#111"
    />
    <polygon points={rim(876, 342, 0, 360)} fill="#8a96a4" stroke="#111" />
    <g shapeRendering="auto" fill="none" strokeWidth="1.300">
      <path d="M846 516 848 500" stroke="#37e04a" />
      <path d="M846 516H862" stroke="#d8343c" />
      <path d="M846 516 855 524" stroke="#3fe6f0" />
      <circle cx="849" cy="499.500" r="2.500" fill="#37e04a" />
      <circle cx="862" cy="516" r="2.200" fill="#e03a3a" />
      <circle cx="855" cy="524.500" r="2.600" fill="#22ecf5" />
    </g>
  </Model>
);

/* ---------- status and task bars ---------- */

const Status = styled.footer`
  flex: none;
  height: 35px;
  display: flex;
  align-items: center;
  padding: 0 18px 0 6px;
  background: #f6fafb;
  border-top: 1px solid #b1b8b9;
`;

const StatusButton = styled.button<{ $on?: boolean }>`
  display: flex;
  align-items: center;
  justify-content: center;
  width: 22px;
  height: 24px;
  margin-right: 4px;
  border: 1px solid ${p => (p.$on ? "#a6a9ab" : "transparent")};
  background: ${p => (p.$on ? "#dcdddf" : "none")};
`;

const Message = styled.span`
  display: flex;
  align-items: center;
  gap: 6px;
  flex: 1;
  padding-left: 9px;
  font-size: 11px;
  &::before { content: ""; width: 5px; height: 5px; border-radius: 50%; background: #1d5f86; }
`;

const FindBox = styled.button`
  display: flex;
  align-items: center;
  gap: 4px;
  height: 25px;
  margin: 0 2px;
  padding: 0 3px 0 5px;
  border: 1px solid #a3a9aa;
  background: #fff;
`;

const FilterBox = styled.label`
  display: flex;
  align-items: center;
  width: 177px;
  height: 25px;
  margin-left: 97px;
  padding-right: 4px;
  border: 1px solid #a3a9aa;
  select {
    flex: 1;
    height: 23px;
    appearance: none;
    border: 0;
    border-right: 1px solid #a3a9aa;
    margin-right: 3px;
    padding: 0 7px;
    background: none;
  }
`;

const TaskBar = styled.footer`
  flex: none;
  height: 40px;
  display: flex;
  background: linear-gradient(90deg, #21363f, #20343f 50%, #1b2945 80%, #1a2744);
`;

const Task = styled.button<{ $state?: "open" | "active" }>`
  display: flex;
  align-items: center;
  justify-content: center;
  width: 49px;
  background-color: ${p => (p.$state === "active" ? "#4d5e66" : "transparent")};
  background-image: ${p => (p.$state ? "linear-gradient(#76b9ed, #76b9ed)" : "none")};
  background-size: ${p => (p.$state === "active" ? 49 : 40)}px 2px;
  background-position: center bottom;
  background-repeat: no-repeat;
`;

const Tray = styled.div`
  margin-left: auto;
  display: flex;
  align-items: center;
  color: #fff;
  gap: 7px;
  padding-right: 24px;
`;

const Clock = styled.time`
  display: flex;
  flex-direction: column;
  align-items: center;
  width: 83px;
  line-height: 18px;
  margin-top: 1px;
`;

const Ime = styled.span<{ $boxed?: boolean }>`
  width: ${p => (p.$boxed ? 15 : 16)}px;
  line-height: ${p => (p.$boxed ? 15 : 18)}px;
  font-size: ${p => (p.$boxed ? 13 : 16)}px;
  font-weight: 500;
  text-align: center;
  color: ${p => (p.$boxed ? "#111" : "#fff")};
  background: ${p => (p.$boxed ? "#fff" : "none")};
  margin-right: ${p => (p.$boxed ? 0 : 6)}px;
`;

const Watermark = styled.div`
  position: fixed;
  right: 18px;
  bottom: 6px;
  width: 168px;
  pointer-events: none;
  color: #0c0c0c;
  > div { display: flex; justify-content: space-between; font-size: 40px; line-height: 42px; font-weight: 300; }
  b { font-weight: 400; color: #fb6a35; }
  small { display: block; padding-right: 7px; font-family: "Liberation Sans", sans-serif; font-style: italic; font-size: 18px; line-height: 20px; color: rgba(170, 174, 184, 0.7); text-align: right; }
`;

const Flame = styled.svg`
  position: absolute;
  left: 65px;
  top: -18px;
`;

const taskIcons: [string, React.ReactNode, ("open" | "active")?][] = [
  ["开始", <path d="M4 7 11 6V12H4zM12 6 20 5V12H12zM4 13H11V19L4 18zM12 13H20V20L12 19z" fill="#fff" />],
  ["搜索", <><circle cx="13.500" cy="9.500" r="5.500" fill="none" stroke="#fff" strokeWidth="1.400" /><path d="M9.500 13.500 3 20" stroke="#fff" strokeWidth="1.600" /></>],
  ["文件资源管理器", <><path d="M1 4H9L11 6H23V21H1z" fill="#f0b93c" /><path d="M1 8H23V21H1z" fill="#fbd768" /><path d="M5 21V14H19V21H15V17H9V21z" fill="#3b8ad0" /></>, "open"],
  ["安全卫士", <><circle cx="12" cy="12" r="11" fill="#fbe21c" /><path d="M3 7C6 0 16-1 22 6 19 8 15 5 11 4 8 4 5 5 3 7zM21 17C18 24 8 25 2 18 5 16 9 19 13 20 16 20 19 19 21 17z" fill="#2fae3c" /><path d="M12 7V17M7 12H17" stroke="#1d9a3a" strokeWidth="3" /></>],
  ["截图工具", <><ellipse cx="11" cy="10" rx="11" ry="6.500" fill="#c9cccf" stroke="#8b8f92" transform="rotate(-20 11 10)" /><ellipse cx="12" cy="8" rx="10" ry="5.500" fill="#fff" stroke="#c33" strokeWidth="1.300" transform="rotate(-20 12 8)" /><path d="M7 13 14 5M9 7 18 15" stroke="#888" /><g fill="none" stroke="#2c7fd0" strokeWidth="2"><ellipse cx="15" cy="19" rx="2.500" ry="3.500" /><ellipse cx="20" cy="17" rx="3" ry="2.500" /></g></>],
  ["应用", <><rect x="1" y="1" width="22" height="22" rx="3" fill="#f3f3f3" /><path d="M10 2C4 7 2 11 1 15L9 19z" fill="#2f9a3a" /><path d="M9 3C16 5 20 9 22 15L13 21C13 14 11 8 9 3z" fill="#d8241f" /></>],
  ["录屏", <><rect width="24" height="24" fill="#b7d9f4" /><rect width="12" height="12" x="12" fill="#a9dba4" /><rect y="12" width="12" height="12" fill="#fbe0b5" /><path d="M0 0H5L13 10 11 12z" fill="#c2405a" /><circle cx="12" cy="12" r="3" fill="#e01b1b" /><path d="M13 12V24L16 21.500 18 26 20 25 18 20.500H22z" fill="#fff" stroke="#222" /></>],
  ["Edge", <><circle cx="12" cy="12" r="12" fill="#1b74c8" /><path d="M1 9C3 2 10-1 16 1 23 3 25 10 23 14 21 17 15 17 14 15 17 12 15 7 11 7 6 6 3 7 1 9z" fill="#45c2a0" /><path d="M9 11C7 15 9 21 17 21 13 25 4 24 1 17 0 9 6 5 11 8 9 9 9 10 9 11z" fill="#1554a0" /><path d="M14 15C17 12 15 8 12 8 10 9 9 12 10 14 12 18 17 19 22 17 20 21 17 21 15 21 9 20 8 14 10 11z" fill="#d9f0fb" opacity=".5" /></>, "open"],
  ["记事本", <><path d="M2 4H22L23 21H1z" fill="#f1efe4" stroke="#aaa" /><path d="M2 1H22V6H2z" fill="#e9c63a" /><path d="M4 2V5M8 2V5M12 2V5M16 2V5M20 2V5" stroke="#555" /><path d="M5 10H19M5 13H17M5 16H12" stroke="#999" /><path d="M9 18 21 10 23 12 12 19z" fill="#d99a3a" stroke="#8a5a1a" strokeWidth=".7" /></>],
  ["PowerPoint", <><path d="M11 3H23V21H11z" fill="#fff" stroke="#c8401f" /><circle cx="17" cy="9" r="3.500" fill="#c8401f" /><path d="M14 15H21M14 18H21" stroke="#c8401f" strokeWidth="1.500" /><path d="M1 3 14 0V24L1 21z" fill="#cf4424" /><text x="3" y="17" fontSize="13" fontWeight="700" fill="#fff">P</text></>, "open"],
  ["Creo", <><rect width="24" height="24" fill="#fff" /><rect x="4" y="4" width="17" height="16" fill="#dfe6ea" stroke="#444" /><rect x="10" y="5" width="10" height="10" fill="#1c8fd0" /><path d="M5 19 9 15H20M9 15V5" stroke="#2d6f90" fill="none" /></>, "active"],
];

export default function App() {
  return (
    <Page>
      <Global />
      <TitleBar>
        <QuickBar>
          <Brand><Icon name="cube" /><span>creo</span><sup>•</sup></Brand>
          <QuickButton aria-label="新建"><Icon name="newDoc" /></QuickButton>
          <QuickButton aria-label="打开"><Icon name="open" /></QuickButton>
          <QuickButton aria-label="保存"><Icon name="save" /></QuickButton>
          <QuickButton aria-label="撤消"><Icon name="undo" /><Caret $tone="#a3a8a8" /></QuickButton>
          <QuickButton aria-label="重做"><Icon name="redo" /><Caret $tone="#a3a8a8" /></QuickButton>
          <QuickButton aria-label="重新生成"><Icon name="regen" size={16} /></QuickButton>
          <QuickButton aria-label="窗口"><Icon name="windows" /><Caret /></QuickButton>
          <QuickButton aria-label="关闭"><Icon name="closeDoc" /></QuickButton>
          <Divider $h={24} $gap={5} />
          <QuickButton aria-label="自定义"><Icon name="customise" /></QuickButton>
        </QuickBar>
        <Title>CYLINDER_SPRING (活动的) - Creo Parametric 8.0</Title>
        <WindowButtons>
          <button aria-label="最小化"><Icon name="minimize" /></button>
          <button aria-label="还原"><Icon name="restore" /></button>
          <button aria-label="关闭窗口"><Icon name="closeWin" /></button>
        </WindowButtons>
      </TitleBar>

      <TabBar>
        <Tab $kind="file">文件</Tab>
        <Tab $kind="active">模型</Tab>
        {["分析", "实时仿真", "注释", "工具", "视图", "柔性建模", "应用程序", "KISSsoft"].map(t => <Tab key={t}>{t}</Tab>)}
        <TabTools>
          <button aria-label="折叠"><Icon name="up" /></button>
          <button aria-label="搜索命令"><Icon name="search" /></button>
          <HeadButton aria-label="学习"><Icon name="hat" size={14} /><Caret $tone="#fff" /></HeadButton>
          <button>?</button>
        </TabTools>
      </TabBar>

      <Ribbon>
        {groups.map(g => (
          <Group key={g.label}>
            <GroupBody>
              {g.items.map((item, i) =>
                "big" in item ? (
                  <BigCommand key={i}>
                    <Icon name={item.big.icon} />
                    <span>{item.big.text}</span>
                    {item.big.caret && <Caret />}
                  </BigCommand>
                ) : (
                  <Column key={i}>
                    {item.col.map(x => (
                      <Command key={x.text} $off={x.off}>
                        <Icon name={x.icon} />
                        {x.text}
                        {x.caret && <Caret />}
                      </Command>
                    ))}
                  </Column>
                )
              )}
            </GroupBody>
            <GroupLabel>{g.label}<Caret /></GroupLabel>
          </Group>
        ))}
      </Ribbon>

      <Workspace>
        <Side>
          <SideTabs>
            <SideTab $on><Icon name="treeTab" />模型树</SideTab>
            <SideTab $wide><Icon name="folders" />文件夹浏览器</SideTab>
            <SideTab><Icon name="favs" />收藏夹</SideTab>
          </SideTabs>
          <TreeHead>
            <h2>模型树</h2>
            <HeadButton aria-label="设置"><Icon name="tools" /><Caret /></HeadButton>
            <HeadButton aria-label="显示"><Icon name="listDoc" /><Caret /></HeadButton>
            <HeadButton aria-label="隐藏"><Icon name="treeHide" /></HeadButton>
          </TreeHead>
          <SearchRow>
            <Icon name="funnel" />
            <SearchBox>
              <input type="text" aria-label="过滤" />
              <button aria-label="清除"><Icon name="clearX" /></button>
            </SearchBox>
            <SearchTools>
              <HeadButton aria-label="过滤选项"><Caret /></HeadButton>
              <HeadButton aria-label="添加"><Icon name="plus" /></HeadButton>
            </SearchTools>
          </SearchRow>
          <Tree>
            <TreeItem $root><Icon name="cube" />CYLINDER_SPRING.PRT</TreeItem>
            {nodes.map(([icon, text, open]) => (
              <TreeItem key={text}><Twisty $shown={open} /><Icon name={icon} size={16} />{text}</TreeItem>
            ))}
          </Tree>
        </Side>

        <Viewport>
          <ViewBar>
            {viewButtons.map(v => (
              <ViewButton key={v} aria-label={v} $on={v === "annot" || v === "spin"}><Icon name={v} /></ViewButton>
            ))}
          </ViewBar>
          <Spring />
          <Tolerances>{"X.X+-0.1\nX.XX+-0.01\nX.XXX+-0.001\nANG.+-0.5"}</Tolerances>
        </Viewport>
      </Workspace>

      <Status>
        <StatusButton $on aria-label="显示模型树"><Icon name="showTree" /></StatusButton>
        <StatusButton aria-label="浏览器"><Icon name="globe" /></StatusButton>
        <StatusButton aria-label="全屏"><Icon name="blank" /></StatusButton>
        <Divider $h={24} />
        <Message>基准平面将不显示。</Message>
        <Divider $h={27} $gap={4} />
        <Divider $h={27} />
        <FindBox aria-label="查找"><Icon name="find" /><Divider $h={23} /><Caret /></FindBox>
        <Divider $h={27} />
        <FilterBox>
          <select aria-label="选择过滤器"><option>几何</option></select>
          <Caret />
        </FilterBox>
      </Status>

      <TaskBar>
        {taskIcons.map(([label, art, state]) => (
          <Task key={label} aria-label={label} $state={state}>
            <Svg width="24" height="24" viewBox="0 0 24 24" overflow="visible">{art}</Svg>
          </Task>
        ))}
        <Tray>
          <Svg width="12" height="16" viewBox="0 0 12 16"><rect x="3" width="6" height="3" fill="#eee" /><rect x="1" y="3" width="10" height="13" rx="2" fill="#3fae2a" /><path d="M6 5V14M3.500 8V10L6 12M8.500 7V9L6 11" stroke="#fff" fill="none" /></Svg>
          <Svg width="22" height="16" viewBox="0 0 22 16"><path d="M5 11 11 5 17 11" fill="none" stroke="#fff" strokeWidth="1.400" /></Svg>
          <Svg width="16" height="14" viewBox="0 0 16 14"><path d="M0 13 9 1 8 12z" fill="#e01b1b" /><path d="M9 6 16 13H9z" fill="#24c845" /></Svg>
          <Svg width="17" height="16" viewBox="0 0 17 16"><path d="M5 3.500H16V11.500H4M10 12V15M7 15H13" fill="none" stroke="#fff" strokeWidth="1.200" /><rect x=".6" y="1.600" width="4" height="5" fill="none" stroke="#fff" /><path d="M2.500 7V11.500H5" fill="none" stroke="#fff" /></Svg>
          <Svg width="16" height="16" viewBox="0 0 16 16" fill="none" stroke="#fff"><path d="M1 6H3L7 2V14L3 10H1zM9 6C10 7 10 9 9 10M11 4C13 6 13 10 11 12" /><path d="M13 2C16 5 16 11 13 14" stroke="#8790a0" /></Svg>
          <Ime>英</Ime>
          <Ime $boxed>拼</Ime>
          <Clock><span>11:37:35</span><span>2023/2/25</span></Clock>
          <Svg width="18" height="18" viewBox="0 0 18 18"><path d="M1 2H17V14H12L9 17V14H1z" fill="none" stroke="#fff" strokeWidth="1.300" /></Svg>
        </Tray>
      </TaskBar>

      <Watermark>
        <div><b>野</b><b>火</b><span>论</span><span>坛</span></div>
        <small>www.proewildfire.cn</small>
        <Flame width="20" height="46" viewBox="0 0 20 46" aria-hidden="true">
          <path d="M6 1C15 10 21 22 16 33 13 40 8 43 1 42 5 34 5 26 6 17 9 21 8 24 8 28 12 18 10 9 6 1z" fill="#fb6a35" />
        </Flame>
      </Watermark>
    </Page>
  );
}
